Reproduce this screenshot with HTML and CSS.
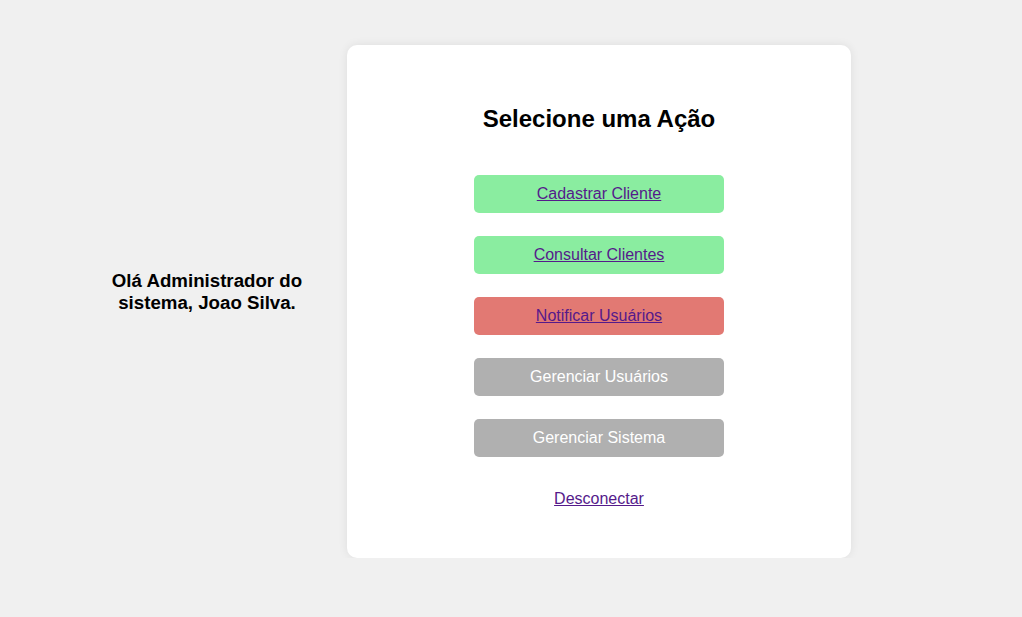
FILE: index.html
```html
<!DOCTYPE html>
<html lang="pt-BR">
<head>
<meta charset="utf-8">
<title>Painel</title>
<link rel="stylesheet" href="styles.css">
</head>
<body>
<div class="page">
  <div class="greeting">Olá Administrador do sistema, Joao Silva.</div>
  <div class="card">
    <h2 class="title">Selecione uma Ação</h2>
    <div class="actions">
      <a class="btn btn-green" href="#">Cadastrar Cliente</a>
      <a class="btn btn-green" href="#">Consultar Clientes</a>
      <a class="btn btn-red" href="#">Notificar Usuários</a>
      <span class="btn btn-gray">Gerenciar Usuários</span>
      <span class="btn btn-gray">Gerenciar Sistema</span>
    </div>
    <a class="logout" href="#">Desconectar</a>
  </div>
</div>
</body>
</html>
```

FILE: styles.css
```css
html, body {
  margin: 0;
  padding: 0;
}
body {
  background: #f0f0f0;
  font-family: "Liberation Sans", Arial, sans-serif;
  color: #000;
}
.page {
  display: flex;
  align-items: center;
  padding: 45px 0 0 97px;
  gap: 30px;
}
.greeting {
  width: 220px;
  text-align: center;
  font-weight: bold;
  font-size: 18.7px;
  line-height: 22px;
  padding-bottom: 19px;
}
.card {
  width: 504px;
  box-sizing: border-box;
  background: #fff;
  border-radius: 10px;
  box-shadow: 0 0 10px rgba(0, 0, 0, 0.08);
  padding: 40px 20px 50px;
  display: flex;
  flex-direction: column;
  align-items: center;
}
.title {
  margin: 20px 0 42px;
  font-size: 24px;
  line-height: 28px;
  font-weight: bold;
}
.actions {
  display: flex;
  flex-direction: column;
  gap: 23px;
}
.btn {
  display: flex;
  align-items: center;
  justify-content: center;
  width: 250px;
  height: 38px;
  border-radius: 5px;
  font-size: 16px;
  color: #551a8b;
  text-decoration: underline;
}
.btn-green {
  background: #8aeda0;
}
.btn-red {
  background: #e27973;
}
.btn-gray {
  background: #b0b0b0;
  color: #fff;
  text-decoration: none;
}
.logout {
  margin-top: 33px;
  font-size: 16px;
  line-height: 18px;
  color: #551a8b;
}
```
